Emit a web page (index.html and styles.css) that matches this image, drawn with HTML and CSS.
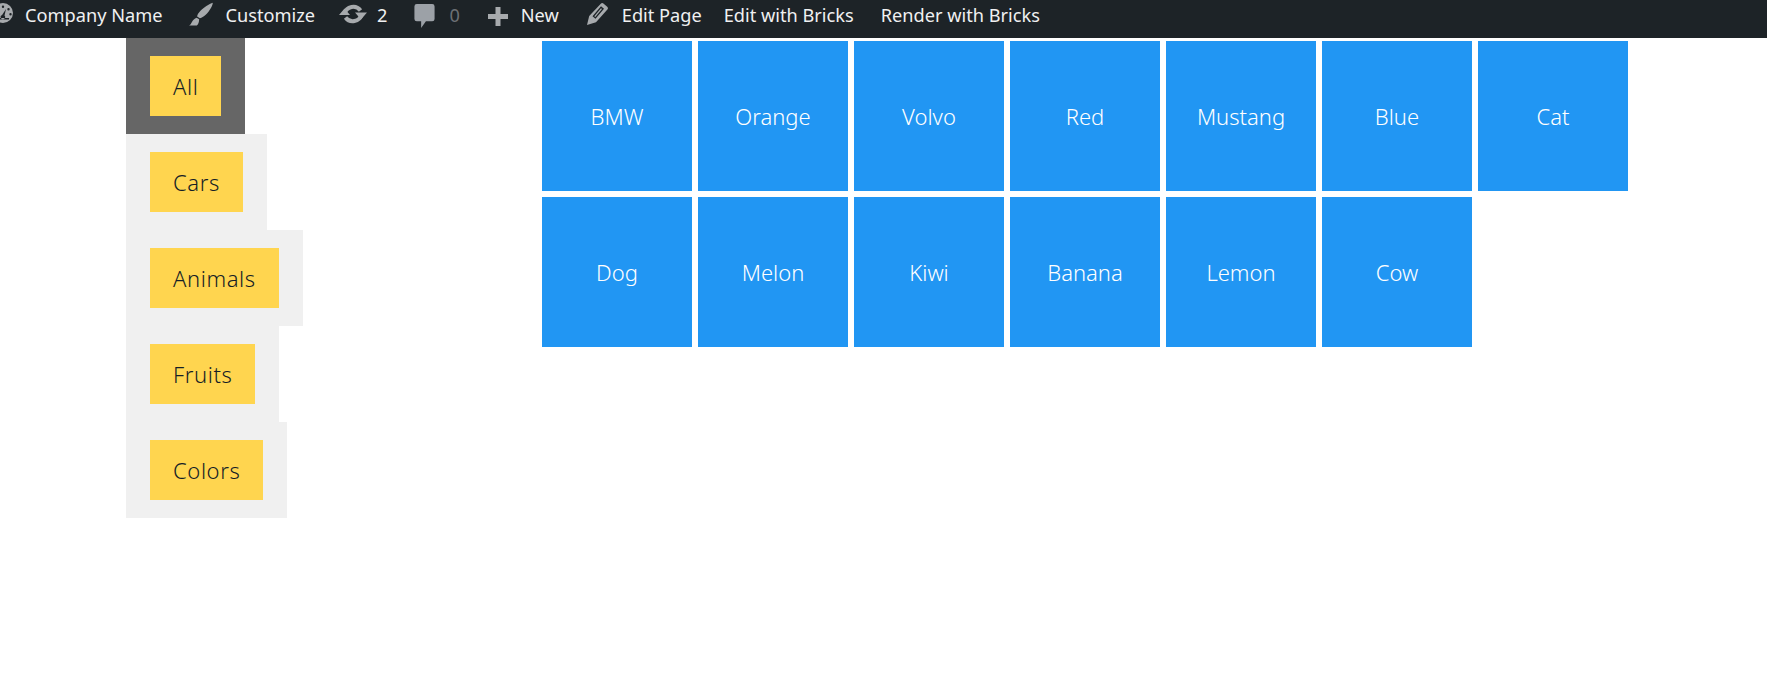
FILE: index.html
```html
<!DOCTYPE html>
<html lang="en">
<head>
<meta charset="utf-8">
<title>Filter</title>
<link rel="stylesheet" href="styles.css">
</head>
<body>
<header class="adminbar">
  <a class="item"><svg class="icon icon-dash" viewBox="0 0 20 20"><path fill-rule="evenodd" d="M10 0a10 10 0 1 0 0 20 10 10 0 0 0 0-20zM10 2.500a1.200 1.200 0 1 1 0 2.400 1.200 1.200 0 0 1 0-2.400zM4.500 5a1.200 1.200 0 1 1 0 2.400 1.200 1.200 0 0 1 0-2.400zM15.500 5a1.200 1.200 0 1 1 0 2.400 1.200 1.200 0 0 1 0-2.400zM13 6l-1.500 6.500a2.200 2.200 0 1 1-2.400-.6zM2.500 10a1.200 1.200 0 1 1 0 2.400 1.200 1.200 0 0 1 0-2.400zM17.500 10a1.200 1.200 0 1 1 0 2.400 1.200 1.200 0 0 1 0-2.400zM4 15h12v1.500H4z"/></svg>Company Name</a>
  <a class="item"><svg class="icon icon-brush" viewBox="0 0 26 26"><path d="M25.800.8C25.600 4.800 21 11.800 16.500 15.200 14.800 16.500 13 17.500 11.800 17.500L8.800 15.800C8.900 14 10.300 11.600 12.200 9.700 15.600 6.200 22 1.800 25.800.8ZM8.300 17 11 18.600C11 21.500 10 24.500 8.500 25.500H0C3 24.500 3.200 18.500 8.300 17Z"/></svg>Customize</a>
  <a class="item"><svg class="icon icon-update" viewBox="0 0 28 22"><path class="arc" d="M5.500 10.500A9 9 0 0 1 21.500 7.500"/><path class="arc" d="M22.500 11.500A9 9 0 0 1 6.500 14.500"/><path d="M16 9.500H28L22 16.500ZM0 12H11L5.500 5.500Z"/></svg>2</a>
  <a class="item item-muted"><svg class="icon icon-comment" viewBox="0 0 21 25"><path d="M2.500 0h16A2.500 2.500 0 0 1 21 2.500v13a2.500 2.500 0 0 1-2.500 2.500H12L7 25v-7H2.500A2.500 2.500 0 0 1 0 15.500v-13A2.500 2.500 0 0 1 2.500 0z"/></svg>0</a>
  <a class="item"><svg class="icon icon-plus" viewBox="0 0 20 19"><path d="M7.500 0h5v7h7.500v5h-7.500v7h-5v-7H0V7h7.500z"/></svg>New</a>
  <a class="item"><svg class="icon icon-edit" viewBox="0 0 21 22"><path fill-rule="evenodd" d="M13.800.7c.8-.9 1.800-.9 2.600-.2l3.800 3.200c.9.800 1 1.800.2 2.700L9 19.300 0 22 2.200 13zM5.500 13.300l3 2.500 8.500-10-3-2.500zM7.300 13.200 14 5.300l1 .8-6.700 7.900z"/></svg>Edit Page</a>
  <a class="item item-bricks">Edit with Bricks</a>
  <a class="item item-render">Render with Bricks</a>
</header>
<main class="layout">
  <ul class="filters">
    <li class="filter filter-active"><button class="filter-btn">All</button></li>
    <li class="filter"><button class="filter-btn">Cars</button></li>
    <li class="filter"><button class="filter-btn">Animals</button></li>
    <li class="filter"><button class="filter-btn">Fruits</button></li>
    <li class="filter"><button class="filter-btn">Colors</button></li>
  </ul>
  <div class="tiles">
    <div class="tile">BMW</div>
    <div class="tile">Orange</div>
    <div class="tile">Volvo</div>
    <div class="tile">Red</div>
    <div class="tile">Mustang</div>
    <div class="tile">Blue</div>
    <div class="tile">Cat</div>
    <div class="tile">Dog</div>
    <div class="tile">Melon</div>
    <div class="tile">Kiwi</div>
    <div class="tile">Banana</div>
    <div class="tile">Lemon</div>
    <div class="tile">Cow</div>
  </div>
</main>
</body>
</html>
```
FILE: styles.css
```css
* { box-sizing: border-box; }
html, body { margin: 0; padding: 0; background: #fff; overflow: hidden; }
body { height: 699px; font-family: "Noto Sans", "Open Sans", sans-serif; font-weight: 300; }

.adminbar {
  display: flex;
  align-items: center;
  height: 38px;
  padding-bottom: 8px;
  background: #1d2327;
  color: #f0f0f1;
  font-size: 18.2px;
  font-weight: 400;
  white-space: nowrap;
}
.item { display: flex; align-items: center; }
.icon { fill: #a7aaad; flex: none; }
.arc { fill: none; stroke: #a7aaad; stroke-width: 4; }
.icon-dash { width: 20px; height: 20px; margin: 0 12px 4px -7px; }
.icon-brush { width: 26px; height: 24px; margin: 0 11px 2px 26px; }
.icon-update { width: 28px; height: 22px; margin: 0 10px 2px 24px; }
.icon-comment { width: 21px; height: 24px; margin: 1px 14px 0 27px; fill: #9ca1a7; }
.icon-plus { width: 20px; height: 19px; margin: 2px 13px 0 28px; }
.icon-edit { width: 21px; height: 22px; margin: 0 14px 2px 28px; }
.item-muted { color: #6c7075; }
.item-bricks { margin-left: 22px; }
.item-render { margin-left: 27px; }

.layout { display: flex; align-items: flex-start; }
.filters {
  display: flex;
  flex-direction: column;
  align-items: flex-start;
  list-style: none;
  margin: 0 0 0 126px;
  padding: 0;
  width: 416px;
}
.filter { background: #f0f0f0; padding: 18px 24px; }
.filter-active { background: #666; }
.filter-btn {
  display: block;
  height: 60px;
  padding: 0 23px;
  border: 0;
  background: #ffd54f;
  color: #161e26;
  font: inherit;
  font-size: 22px;
  letter-spacing: .6px;
}
.tiles {
  display: flex;
  flex-wrap: wrap;
  gap: 6px;
  width: 1100px;
  padding-top: 3px;
}
.tile {
  display: flex;
  align-items: center;
  justify-content: center;
  width: 150px;
  height: 150px;
  background: #2196f3;
  color: #fff;
  font-size: 22px;
}
```
